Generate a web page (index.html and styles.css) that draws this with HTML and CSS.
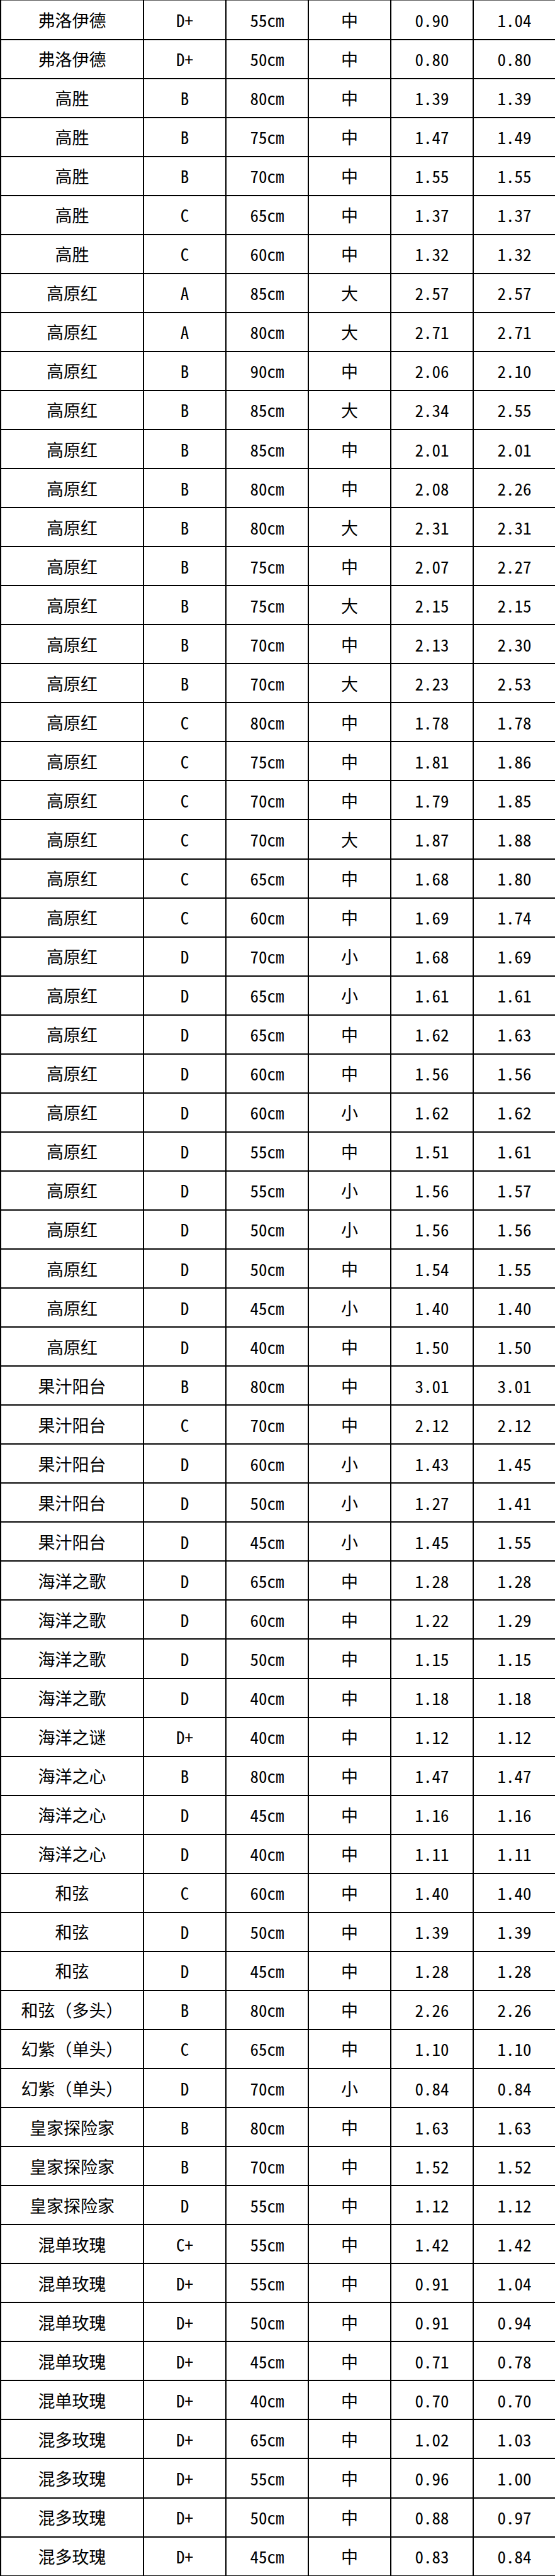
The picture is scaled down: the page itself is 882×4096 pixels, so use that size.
FILE: index.html
```html
<!DOCTYPE html>
<html lang="zh-CN">
<head>
<meta charset="utf-8">
<title>价格表</title>
<link rel="stylesheet" href="styles.css">
</head>
<body>
<table class="price-table">
<colgroup>
<col class="col-name">
<col class="col-grade">
<col class="col-len">
<col class="col-size">
<col class="col-p1">
<col class="col-p2">
</colgroup>
<tbody>
<tr><td>弗洛伊德</td><td>D+</td><td>55cm</td><td>中</td><td>0.90</td><td>1.04</td></tr>
<tr><td>弗洛伊德</td><td>D+</td><td>50cm</td><td>中</td><td>0.80</td><td>0.80</td></tr>
<tr><td>高胜</td><td>B</td><td>80cm</td><td>中</td><td>1.39</td><td>1.39</td></tr>
<tr><td>高胜</td><td>B</td><td>75cm</td><td>中</td><td>1.47</td><td>1.49</td></tr>
<tr><td>高胜</td><td>B</td><td>70cm</td><td>中</td><td>1.55</td><td>1.55</td></tr>
<tr><td>高胜</td><td>C</td><td>65cm</td><td>中</td><td>1.37</td><td>1.37</td></tr>
<tr><td>高胜</td><td>C</td><td>60cm</td><td>中</td><td>1.32</td><td>1.32</td></tr>
<tr><td>高原红</td><td>A</td><td>85cm</td><td>大</td><td>2.57</td><td>2.57</td></tr>
<tr><td>高原红</td><td>A</td><td>80cm</td><td>大</td><td>2.71</td><td>2.71</td></tr>
<tr><td>高原红</td><td>B</td><td>90cm</td><td>中</td><td>2.06</td><td>2.10</td></tr>
<tr><td>高原红</td><td>B</td><td>85cm</td><td>大</td><td>2.34</td><td>2.55</td></tr>
<tr><td>高原红</td><td>B</td><td>85cm</td><td>中</td><td>2.01</td><td>2.01</td></tr>
<tr><td>高原红</td><td>B</td><td>80cm</td><td>中</td><td>2.08</td><td>2.26</td></tr>
<tr><td>高原红</td><td>B</td><td>80cm</td><td>大</td><td>2.31</td><td>2.31</td></tr>
<tr><td>高原红</td><td>B</td><td>75cm</td><td>中</td><td>2.07</td><td>2.27</td></tr>
<tr><td>高原红</td><td>B</td><td>75cm</td><td>大</td><td>2.15</td><td>2.15</td></tr>
<tr><td>高原红</td><td>B</td><td>70cm</td><td>中</td><td>2.13</td><td>2.30</td></tr>
<tr><td>高原红</td><td>B</td><td>70cm</td><td>大</td><td>2.23</td><td>2.53</td></tr>
<tr><td>高原红</td><td>C</td><td>80cm</td><td>中</td><td>1.78</td><td>1.78</td></tr>
<tr><td>高原红</td><td>C</td><td>75cm</td><td>中</td><td>1.81</td><td>1.86</td></tr>
<tr><td>高原红</td><td>C</td><td>70cm</td><td>中</td><td>1.79</td><td>1.85</td></tr>
<tr><td>高原红</td><td>C</td><td>70cm</td><td>大</td><td>1.87</td><td>1.88</td></tr>
<tr><td>高原红</td><td>C</td><td>65cm</td><td>中</td><td>1.68</td><td>1.80</td></tr>
<tr><td>高原红</td><td>C</td><td>60cm</td><td>中</td><td>1.69</td><td>1.74</td></tr>
<tr><td>高原红</td><td>D</td><td>70cm</td><td>小</td><td>1.68</td><td>1.69</td></tr>
<tr><td>高原红</td><td>D</td><td>65cm</td><td>小</td><td>1.61</td><td>1.61</td></tr>
<tr><td>高原红</td><td>D</td><td>65cm</td><td>中</td><td>1.62</td><td>1.63</td></tr>
<tr><td>高原红</td><td>D</td><td>60cm</td><td>中</td><td>1.56</td><td>1.56</td></tr>
<tr><td>高原红</td><td>D</td><td>60cm</td><td>小</td><td>1.62</td><td>1.62</td></tr>
<tr><td>高原红</td><td>D</td><td>55cm</td><td>中</td><td>1.51</td><td>1.61</td></tr>
<tr><td>高原红</td><td>D</td><td>55cm</td><td>小</td><td>1.56</td><td>1.57</td></tr>
<tr><td>高原红</td><td>D</td><td>50cm</td><td>小</td><td>1.56</td><td>1.56</td></tr>
<tr><td>高原红</td><td>D</td><td>50cm</td><td>中</td><td>1.54</td><td>1.55</td></tr>
<tr><td>高原红</td><td>D</td><td>45cm</td><td>小</td><td>1.40</td><td>1.40</td></tr>
<tr><td>高原红</td><td>D</td><td>40cm</td><td>中</td><td>1.50</td><td>1.50</td></tr>
<tr><td>果汁阳台</td><td>B</td><td>80cm</td><td>中</td><td>3.01</td><td>3.01</td></tr>
<tr><td>果汁阳台</td><td>C</td><td>70cm</td><td>中</td><td>2.12</td><td>2.12</td></tr>
<tr><td>果汁阳台</td><td>D</td><td>60cm</td><td>小</td><td>1.43</td><td>1.45</td></tr>
<tr><td>果汁阳台</td><td>D</td><td>50cm</td><td>小</td><td>1.27</td><td>1.41</td></tr>
<tr><td>果汁阳台</td><td>D</td><td>45cm</td><td>小</td><td>1.45</td><td>1.55</td></tr>
<tr><td>海洋之歌</td><td>D</td><td>65cm</td><td>中</td><td>1.28</td><td>1.28</td></tr>
<tr><td>海洋之歌</td><td>D</td><td>60cm</td><td>中</td><td>1.22</td><td>1.29</td></tr>
<tr><td>海洋之歌</td><td>D</td><td>50cm</td><td>中</td><td>1.15</td><td>1.15</td></tr>
<tr><td>海洋之歌</td><td>D</td><td>40cm</td><td>中</td><td>1.18</td><td>1.18</td></tr>
<tr><td>海洋之谜</td><td>D+</td><td>40cm</td><td>中</td><td>1.12</td><td>1.12</td></tr>
<tr><td>海洋之心</td><td>B</td><td>80cm</td><td>中</td><td>1.47</td><td>1.47</td></tr>
<tr><td>海洋之心</td><td>D</td><td>45cm</td><td>中</td><td>1.16</td><td>1.16</td></tr>
<tr><td>海洋之心</td><td>D</td><td>40cm</td><td>中</td><td>1.11</td><td>1.11</td></tr>
<tr><td>和弦</td><td>C</td><td>60cm</td><td>中</td><td>1.40</td><td>1.40</td></tr>
<tr><td>和弦</td><td>D</td><td>50cm</td><td>中</td><td>1.39</td><td>1.39</td></tr>
<tr><td>和弦</td><td>D</td><td>45cm</td><td>中</td><td>1.28</td><td>1.28</td></tr>
<tr><td>和弦（多头）</td><td>B</td><td>80cm</td><td>中</td><td>2.26</td><td>2.26</td></tr>
<tr><td>幻紫（单头）</td><td>C</td><td>65cm</td><td>中</td><td>1.10</td><td>1.10</td></tr>
<tr><td>幻紫（单头）</td><td>D</td><td>70cm</td><td>小</td><td>0.84</td><td>0.84</td></tr>
<tr><td>皇家探险家</td><td>B</td><td>80cm</td><td>中</td><td>1.63</td><td>1.63</td></tr>
<tr><td>皇家探险家</td><td>B</td><td>70cm</td><td>中</td><td>1.52</td><td>1.52</td></tr>
<tr><td>皇家探险家</td><td>D</td><td>55cm</td><td>中</td><td>1.12</td><td>1.12</td></tr>
<tr><td>混单玫瑰</td><td>C+</td><td>55cm</td><td>中</td><td>1.42</td><td>1.42</td></tr>
<tr><td>混单玫瑰</td><td>D+</td><td>55cm</td><td>中</td><td>0.91</td><td>1.04</td></tr>
<tr><td>混单玫瑰</td><td>D+</td><td>50cm</td><td>中</td><td>0.91</td><td>0.94</td></tr>
<tr><td>混单玫瑰</td><td>D+</td><td>45cm</td><td>中</td><td>0.71</td><td>0.78</td></tr>
<tr><td>混单玫瑰</td><td>D+</td><td>40cm</td><td>中</td><td>0.70</td><td>0.70</td></tr>
<tr><td>混多玫瑰</td><td>D+</td><td>65cm</td><td>中</td><td>1.02</td><td>1.03</td></tr>
<tr><td>混多玫瑰</td><td>D+</td><td>55cm</td><td>中</td><td>0.96</td><td>1.00</td></tr>
<tr><td>混多玫瑰</td><td>D+</td><td>50cm</td><td>中</td><td>0.88</td><td>0.97</td></tr>
<tr><td>混多玫瑰</td><td>D+</td><td>45cm</td><td>中</td><td>0.83</td><td>0.84</td></tr>
</tbody>
</table>
</body>
</html>
```

FILE: styles.css
```css
html, body {
  margin: 0;
  padding: 0;
  background: #ffffff;
}

.price-table {
  width: 882px;
  border-collapse: collapse;
  table-layout: fixed;
  font-family: "Noto Sans CJK SC", "Noto Sans", sans-serif;
  font-size: 27px;
  color: #000000;
}

.col-name { width: 227px; }
.col-grade,
.col-len,
.col-size,
.col-p1,
.col-p2 { width: 131px; }

.price-table tr {
  height: 62.06px;
}

.price-table td {
  border: 2px solid #000000;
  padding: 0;
  text-align: center;
  vertical-align: middle;
  line-height: 1;
  white-space: nowrap;
}

.price-table td + td {
  font-feature-settings: "hwid" 1;
}

.price-table tr:first-child td {
  border-top: 1px solid #555555;
}
```
